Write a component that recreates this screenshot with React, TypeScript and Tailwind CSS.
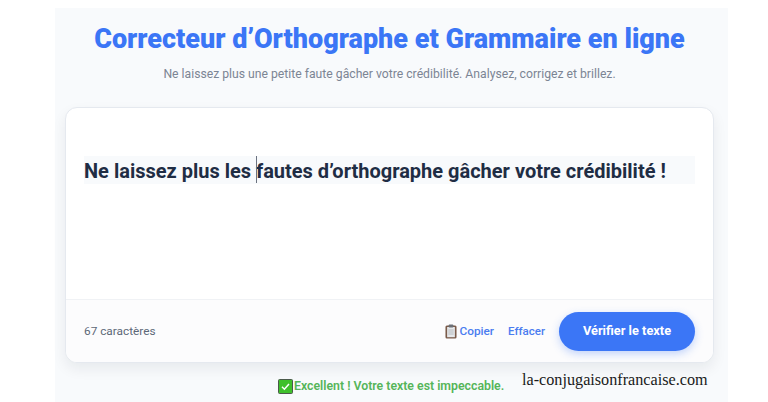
import React from 'react';

function ClipboardIcon() {
  return (
    <svg width="12" height="15" viewBox="0 0 13 15" preserveAspectRatio="none" className="shrink-0">
      <rect x="0.5" y="1.5" width="12" height="13" rx="1.5" fill="#7a5b4a" />
      <rect x="2.3" y="3" width="8.4" height="10.2" fill="#e6e8ea" />
      <rect x="4" y="0.4" width="5" height="3.2" rx="0.8" fill="#6b6f76" />
      <path d="M3.6 6h5.8M3.6 8h5.8M3.6 10h5.8" stroke="#a9adb2" strokeWidth="0.8" />
    </svg>
  );
}

function CheckIcon() {
  return (
    <svg width="15" height="15" viewBox="0 0 15 15" className="shrink-0">
      <rect x="0.5" y="0.5" width="14" height="14" rx="1" fill="#3fc02c" stroke="#4b5a4b" />
      <path d="M4 7.8l2.4 2.4L11 5" fill="none" stroke="#ffffff" strokeWidth="1.5" />
    </svg>
  );
}

export default function App() {
  return (
    <div className="relative w-[768px] h-[402px] overflow-hidden bg-white pt-2 pl-[55px] pr-[40px] font-['Roboto',sans-serif]">
      <div className="h-[394px] bg-[#f8fafc] pl-[10px] pr-[14px]">
        {/* Header */}
        <div className="pt-[15px] text-center">
          <h1 className="text-[27px] leading-[32px] font-black text-[#3b76f6] whitespace-nowrap">Correcteur d’Orthographe et Grammaire en ligne</h1>
          <p className="mt-[10px] text-[12.2px] leading-[18px] text-[#7c8594]">Ne laissez plus une petite faute gâcher votre crédibilité. Analysez, corrigez et brillez.</p>
        </div>

        {/* Editor card */}
        <div className="mt-[24px] h-[256px] flex flex-col bg-white rounded-xl border border-[#e5e9ef] shadow-[0_6px_14px_rgba(15,23,42,0.07)] overflow-hidden">
          <div className="flex-1 px-[18px] pt-[48px]">
            <div className="relative h-[28px] bg-[#f8fafc]">
              <p className="text-[20px] leading-[30px] font-bold text-[#1f2d44] whitespace-nowrap">Ne laissez plus les fautes d’orthographe gâcher votre crédibilité !</p>
              <span className="absolute left-[172px] top-0 w-px h-[27px] bg-[#6b7280]" />
            </div>
          </div>
          <div className="h-[63px] flex items-center justify-between border-t border-[#f0f2f5] bg-[#fcfcfd] pl-[18px] pr-[18px]">
            <span className="mt-px text-[11.8px] text-[#5d6878]">67 caractères</span>
            <div className="flex items-center">
              <ClipboardIcon />
              <span className="mt-px ml-[3px] text-[11.8px] font-medium text-[#4a7cf0]">Copier</span>
              <span className="mt-px ml-[14px] text-[11.5px] font-medium text-[#4a7cf0]">Effacer</span>
              <button className="ml-[14px] w-[136px] h-[39px] rounded-full bg-[#3b76f6] text-white text-[12.8px] font-bold shadow-[0_3px_8px_rgba(59,118,246,0.3)]">Vérifier le texte</button>
            </div>
          </div>
        </div>

        {/* Result */}
        <div className="mt-[14px] flex items-center pl-[213px]">
          <CheckIcon />
          <span className="ml-px text-[12.3px] font-semibold text-[#55b559]">Excellent ! Votre texte est impeccable.</span>
        </div>
      </div>

      {/* Watermark */}
      <span className="absolute left-[522px] top-[370px] text-[16.2px] leading-[20px] text-[#1a1a1a] font-['Liberation_Serif',serif]">la-conjugaisonfrancaise.com</span>
    </div>
  );
}
